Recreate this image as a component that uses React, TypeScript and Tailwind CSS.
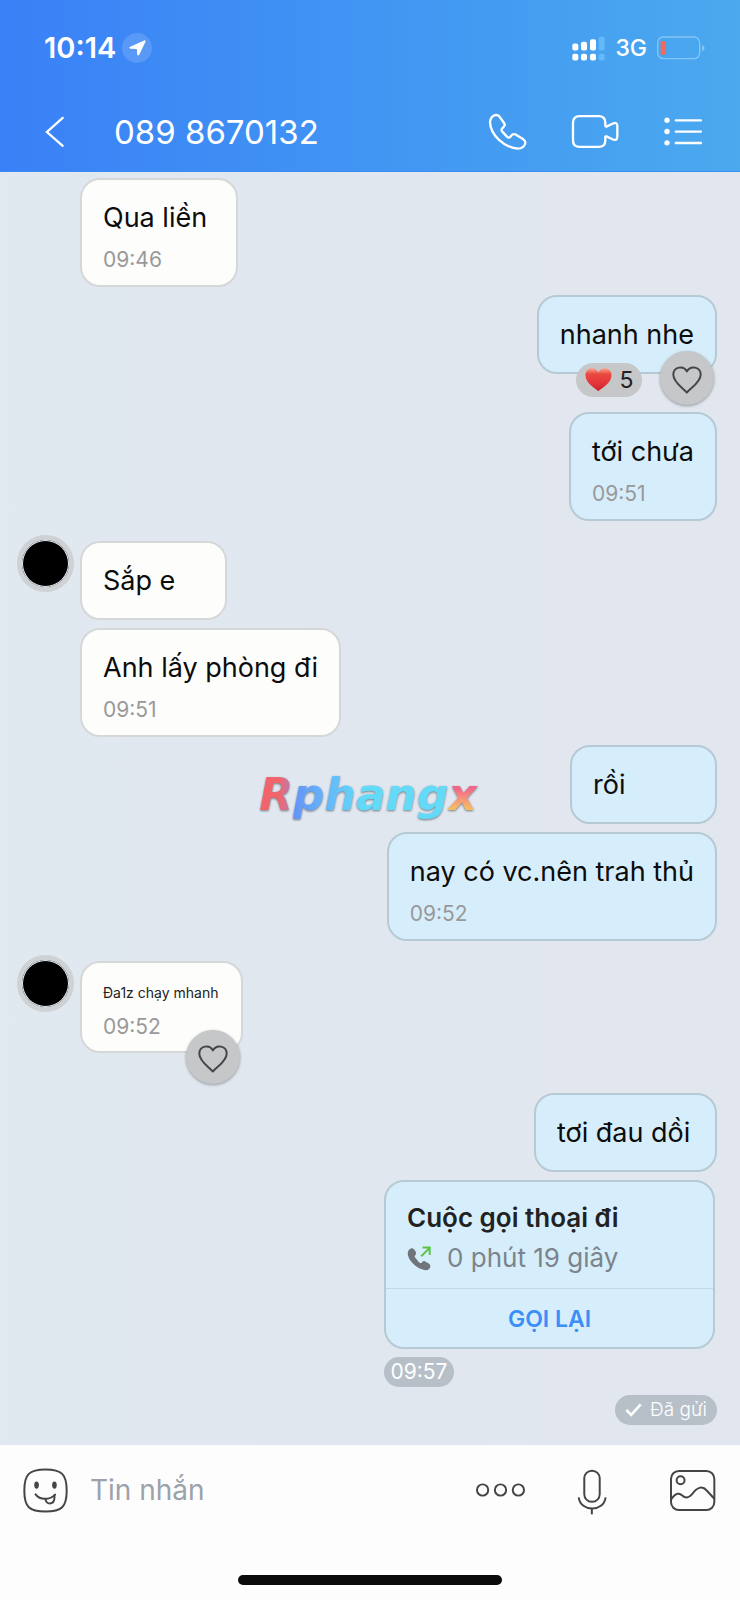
import { useState } from "react";
import type { ReactNode } from "react";
import clsx from "clsx";

interface Message {
  id: number;
  text: string;
  time?: string;
  mine?: boolean;
  avatar?: boolean;
  small?: boolean;
  likeable?: boolean;
  reactions?: number;
  className?: string;
}

const messages: Message[] = [
  { id: 1, text: "Qua liền", time: "09:46", className: "min-w-[158px]" },
  { id: 2, text: "nhanh nhe", mine: true, likeable: true, reactions: 5, className: "mb-[30px]" },
  { id: 3, text: "tới chưa", time: "09:51", mine: true, className: "mb-3" },
  { id: 4, text: "Sắp e", avatar: true, className: "min-w-[147px]" },
  { id: 5, text: "Anh lấy phòng đi", time: "09:51" },
  { id: 6, text: "rồi", mine: true, className: "min-w-[147px]" },
  { id: 7, text: "nay có vc.nên trah thủ", time: "09:52", mine: true, className: "mb-3" },
  {
    id: 8,
    text: "Đa1z chạy mhanh",
    time: "09:52",
    avatar: true,
    small: true,
    likeable: true,
    className: "mb-8 min-w-[163px]",
  },
  { id: 9, text: "tơi đau dồi", mine: true, className: "min-w-[183px]" },
];

function IconButton({ label, children, className }: { label: string; children: ReactNode; className?: string }) {
  return (
    <button type="button" aria-label={label} className={clsx("shrink-0", className)}>
      {children}
    </button>
  );
}

function StatusBar() {
  return (
    <div className="flex h-24 items-center justify-between pl-11 pr-[35px]">
      <div className="flex items-center gap-1.5">
        <span className="text-[29px] leading-9 font-semibold">10:14</span>
        <span className="flex size-[30px] items-center justify-center rounded-full bg-white/15">
          <svg viewBox="384 116 58 54" className="h-[18px] w-[19px]" fill="currentColor">
            <path d="M433 120 Q439 118 437 125 L419 162 Q415 170 412 162 L411 146 L392 145 Q384 143 391 139 Z" />
          </svg>
        </span>
      </div>

      <div className="flex items-center gap-2.5">
        <svg viewBox="610 104 99 74" className="h-[25px] w-[33px]" fill="currentColor">
          <rect x="611" y="126" width="18" height="21" rx="6" />
          <rect x="637" y="121" width="18" height="26" rx="6" />
          <rect x="664" y="113" width="18" height="34" rx="6" />
          <rect x="611" y="157" width="18" height="20" rx="6" />
          <rect x="637" y="157" width="18" height="20" rx="6" />
          <rect x="664" y="157" width="18" height="20" rx="6" />
          <g fill="#66b9f8">
            <rect x="690" y="106" width="18" height="41" rx="6" />
            <rect x="690" y="157" width="18" height="20" rx="6" />
          </g>
        </svg>
        <span className="text-[23px] leading-8 font-medium">3G</span>
        <svg viewBox="863 104 144 72" className="h-6 w-12">
          <rect x="865" y="107" width="126" height="65" rx="17" fill="none" stroke="#82c6f8" strokeWidth="4" />
          <rect x="874" y="119" width="13" height="42" rx="4" fill="#f4675c" />
          <path d="M998 131 Q1006 134 1006 140 T998 150 Z" fill="#82c6f8" />
        </svg>
      </div>
    </div>
  );
}

function NavBar() {
  return (
    <div className="flex h-[75px] items-center pb-1 pl-11 pr-[37px]">
      <IconButton label="Quay lại">
        <svg viewBox="132 346 64 96" className="h-8 w-[21px]" fill="none" stroke="currentColor" strokeWidth="7" strokeLinecap="round">
          <path d="M189 351 L141 394 L189 436" />
        </svg>
      </IconButton>
      <h1 className="ml-[49px] flex-1 truncate text-[33px] leading-10 font-normal">089 8670132</h1>
      <div className="flex items-center gap-11">
        <IconButton label="Gọi thoại">
          <svg viewBox="354 336 117 114" className="h-[38px] w-[39px]" fill="none" stroke="currentColor" strokeWidth="7" strokeLinejoin="round">
            <path d="M378 342 C368 342 360 352 360 364 C362 402 402 440 444 443 C456 443 466 434 466 425 C466 420 464 418 460 415 L438 401 C430 397 427 399 423 405 C419 411 415 411 410 406 L397 392 C393 388 394 384 399 380 C405 375 406 371 402 366 L388 346 C385 342 382 342 378 342 Z" />
          </svg>
        </IconButton>
        <IconButton label="Gọi video">
          <svg viewBox="602 340 144 104" className="h-[35px] w-12" fill="none" stroke="currentColor" strokeWidth="7">
            <path d="M705 378 V366 Q705 346 685 346 H628 Q608 346 608 366 V418 Q608 438 628 438 H685 Q705 438 705 418 V405" />
            <path d="M705 379 L728 368 Q741 363 741 376 V406 Q741 421 728 416 L705 405" />
          </svg>
        </IconButton>
        <IconButton label="Tùy chọn">
          <svg viewBox="880 346 120 92" className="h-[31px] w-10" fill="currentColor">
            {[358, 392, 426].map((y) => (
              <g key={y}>
                <circle cx="892" cy={y} r="8" />
                <rect x="915" y={y - 3} width="82" height="7" rx="3" />
              </g>
            ))}
          </svg>
        </IconButton>
      </div>
    </div>
  );
}

function LikeButton() {
  const [liked, setLiked] = useState(false);

  return (
    <button
      type="button"
      aria-label="Thích"
      aria-pressed={liked}
      onClick={() => setLiked(!liked)}
      className="absolute -bottom-[33px] right-px flex size-[54px] items-center justify-center rounded-full bg-[#c6c7c9] shadow-[0_1px_3px_rgba(0,0,0,0.35)]"
    >
      <svg viewBox="515 253 91 87" className="mt-0.5 h-[29px] w-[30px]" fill={liked ? "#e5383b" : "none"} stroke="#454545" strokeWidth="6" strokeLinejoin="round">
        <path d="M560 336 C548 322 519 305 519 282 C519 258 550 252 560 272 C571 252 602 258 602 282 C602 305 572 322 560 336 Z" />
      </svg>
    </button>
  );
}

function Reactions({ count }: { count: number }) {
  return (
    <div className="absolute -bottom-[25px] right-[73px] flex h-[34px] w-[66px] items-center justify-center gap-2 rounded-full bg-[#c6c7c9]">
      <svg viewBox="253 262 81 73" className="h-6 w-[27px]">
        <defs>
          <linearGradient id="heart" x1="0" y1="0" x2="0" y2="1">
            <stop offset="0" stopColor="#f9a48c" />
            <stop offset="0.25" stopColor="#ea4a3f" />
            <stop offset="0.65" stopColor="#e5343a" />
            <stop offset="1" stopColor="#c9202b" />
          </linearGradient>
        </defs>
        <path d="M293 333 C280 320 254 308 254 284 C254 260 284 256 293 275 C303 256 333 260 333 284 C333 308 306 320 293 333 Z" fill="url(#heart)" />
      </svg>
      <span className="text-[23px] leading-8 text-[#222]">{count}</span>
    </div>
  );
}

function Bubble({ message }: { message: Message }) {
  const { text, time, mine, avatar, small, likeable, reactions, className } = message;

  return (
    <li
      className={clsx(
        "relative flex flex-col rounded-[20px] border-2 px-[21px]",
        mine ? "self-end border-[#b5cad4] bg-[#d6eefb]" : "ml-20 self-start border-[#d6d7d8] bg-[#fdfdfc]",
        small ? "min-h-[92px] pt-5 pb-2.5" : "min-h-[79px] pt-5 pb-[11px]",
        className
      )}
    >
      {avatar && (
        <span className="absolute -left-[65px] -top-2 size-[57px] rounded-full border-[5px] border-[#cfd2d5] bg-black ring-1 ring-inset ring-[#e8f0fa]" />
      )}
      <p className={small ? "text-sm text-[#222]" : "text-[27px] leading-9"}>{text}</p>
      {time && <time className="mt-2.5 text-[21px] leading-7 text-[#999]">{time}</time>}
      {reactions && <Reactions count={reactions} />}
      {likeable && <LikeButton />}
    </li>
  );
}

function CallCard() {
  return (
    <li className="mr-0.5 flex w-[331px] flex-col items-start gap-2 self-end">
      <div className="w-full rounded-[20px] border-2 border-[#b5cad4] bg-[#d6eefb]">
        <div className="px-[21px] pb-3 pt-[18px]">
          <h2 className="text-[26px] leading-9 font-semibold text-[#222]">Cuộc gọi thoại đi</h2>
          <p className="mt-1 flex items-center gap-4 text-[26px] leading-9 text-[#7c848b]">
            <svg viewBox="106 496 74 76" className="h-[25px] w-6">
              <path
                d="M118 503 C110 506 107 513 109 525 C114 545 140 568 163 570 C171 571 178 566 178 558 C178 554 176 552 172 549 L162 543 C158 541 155 542 152 546 C149 549 146 548 141 543 L131 531 C129 528 130 525 133 522 C135 519 134 516 132 512 L127 505 C124 502 121 502 118 503Z"
                fill="#6f757b"
              />
              <path d="M150 527 L175 502 M154 500 H176 V523" fill="none" stroke="#58c443" strokeWidth="6" />
            </svg>
            0 phút 19 giây
          </p>
        </div>
        <button type="button" className="h-[59px] w-full border-t border-[#bfd8e4] pt-0.5 text-[23px] leading-8 font-semibold text-[#3b8ef8]">
          GỌI LẠI
        </button>
      </div>
      <time className="flex h-[30px] w-[70px] items-center justify-center rounded-full bg-[#b7bfc8] text-[21px] text-white">
        09:57
      </time>
    </li>
  );
}

function Watermark() {
  return (
    <div
      aria-hidden="true"
      className="pointer-events-none absolute left-1/2 top-1/2 flex -translate-x-1/2 -translate-y-1/2 items-baseline pb-2.5 font-['DejaVu_Sans',sans-serif] text-[44px] leading-[60px] font-bold italic drop-shadow-[0_1px_1px_#6f7a83]"
    >
      <span className="bg-linear-to-r from-[#f2646b] from-60% to-[#a87bbd] bg-clip-text text-transparent">R</span>
      <span className="bg-linear-to-r from-[#6593f8] to-[#63dbf8] to-45% bg-clip-text text-transparent">phang</span>
      <span className="bg-linear-to-b from-[#f2688a] from-40% to-[#f3c15f] to-75% bg-clip-text pr-1 text-transparent">x</span>
    </div>
  );
}

function Composer() {
  const [text, setText] = useState("");

  return (
    <footer className="bg-[#fdfdfe]">
      <form onSubmit={(e) => e.preventDefault()} className="flex h-[90px] items-center pl-[23px] pr-6">
        <IconButton label="Nhãn dán">
          <svg viewBox="69 112 136 135" className="size-[45px]" fill="none" stroke="#454545" strokeWidth="6" strokeLinecap="round">
            <path d="M137 116 C186 116 201 130 201 180 C201 229 186 243 137 243 C88 243 73 229 73 180 C73 130 88 116 137 116 Z" />
            <path d="M107 191 C120 209 150 209 166 192" />
            <path d="M137 205 C137 223 164 225 164 201 V194" />
            <g fill="#454545" stroke="none">
              <ellipse cx="110" cy="163" rx="7" ry="11" />
              <ellipse cx="164" cy="163" rx="7" ry="11" />
            </g>
          </svg>
        </IconButton>
        <input
          type="text"
          aria-label="Tin nhắn"
          placeholder="Tin nhắn"
          value={text}
          onChange={(e) => setText(e.target.value)}
          className="ml-[22px] h-12 min-w-0 flex-1 bg-transparent text-[28px] outline-none placeholder:text-[#9ba2aa]"
        />
        <IconButton label="Thêm">
          <svg viewBox="316 156 154 48" className="h-4 w-[51px]" fill="none" stroke="#454545" strokeWidth="6">
            <circle cx="339" cy="180" r="17" />
            <circle cx="393" cy="180" r="17" />
            <circle cx="447" cy="180" r="17" />
          </svg>
        </IconButton>
        <IconButton label="Ghi âm" className="mx-[51px] pr-3">
          <svg viewBox="622 114 89 140" className="mt-1 h-[46px] w-[30px]" fill="none" stroke="#454545" strokeWidth="6">
            <rect x="643" y="119" width="47" height="95" rx="23" />
            <path d="M626 200 C632 246 702 246 708 200" />
            <path d="M666 235 V252" />
          </svg>
        </IconButton>
        <IconButton label="Hình ảnh">
          <svg viewBox="899 116 139 128" className="h-[43px] w-[46px]" fill="none" stroke="#454545" strokeWidth="6">
            <rect x="902" y="121" width="131" height="118" rx="24" />
            <circle cx="931" cy="149" r="12" />
            <path d="M903 206 C917 187 927 186 936 195 C945 204 955 204 965 192 C980 171 996 164 1010 180 L1033 205" />
          </svg>
        </IconButton>
      </form>
      <div className="flex justify-center pb-[15px] pt-10">
        <div className="h-2.5 w-[264px] rounded-full bg-[#0b0b0b]" />
      </div>
    </footer>
  );
}

export default function App() {
  return (
    <div className="relative flex min-h-screen flex-col bg-linear-to-r from-[#e0e8f0] to-[#e2e6ef] font-['Inter','Noto_Sans',sans-serif] text-[#0c0c0c]">
      {/* Header */}
      <header className="border-b border-[#3c8df2] bg-linear-to-r from-[#3a80f7] to-[#4ba9ee] text-white">
        <StatusBar />
        <NavBar />
      </header>

      {/* Conversation */}
      <main className="flex-1 pb-5 pr-[23px] pt-1.5">
        <ul className="flex flex-col gap-2">
          {messages.map((message) => (
            <Bubble key={message.id} message={message} />
          ))}
          <CallCard />
          <li className="flex h-[30px] w-[102px] items-center justify-center gap-2 self-end rounded-full bg-[#b7bfc8] text-[19px] font-light text-white">
            <svg viewBox="764 460 52 42" className="h-3.5 w-[17px]" fill="none" stroke="currentColor" strokeWidth="8">
              <path d="M768 481 L783 496 L812 464" />
            </svg>
            Đã gửi
          </li>
        </ul>
      </main>

      <Watermark />

      <Composer />
    </div>
  );
}
